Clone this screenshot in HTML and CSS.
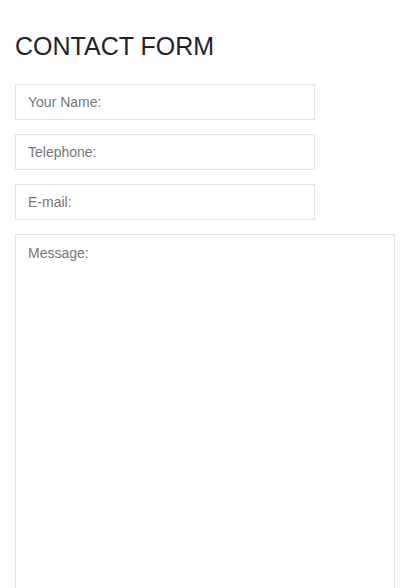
FILE: index.html
```html
<!DOCTYPE html>
<html>
    <head>
        <title>Contact Form</title>
        <meta name="viewport" content="width=device-width, initial-scale=1.0" />
        <link rel="stylesheet" href="styles.css">
    </head>
    <body>
        <h2 class="title">CONTACT FORM</h2>
        <form class="contactForm">
            <input type="text" class="field" placeholder="Your Name:" />
            <input type="tel" class="field" placeholder="Telephone:" />
            <input type="email" class="field" placeholder="E-mail:" />
            <textarea class="message" placeholder="Message:"></textarea>
        </form>
    </body>
</html>
```

FILE: styles.css
```css
body {
    margin: 0;
    padding: 0 15px;
    background: #fff;
    font-family: "Liberation Sans", Arial, sans-serif;
    color: #222;
}

.title {
    margin: 0;
    padding-top: 32px;
    font-size: 25px;
    font-weight: normal;
    line-height: 28px;
    color: #1f2328;
}

.contactForm {
    display: flex;
    flex-direction: column;
    align-items: flex-start;
    gap: 14px;
    margin-top: 24px;
}

.field,
.message {
    box-sizing: border-box;
    margin: 0;
    padding: 0 12px;
    border: 1px solid #e3e3e3;
    border-radius: 0;
    font-family: inherit;
    font-size: 14px;
    color: #333;
    outline: none;
}

.field {
    width: 300px;
    height: 36px;
}

.message {
    width: 380px;
    height: 400px;
    padding-top: 10px;
    resize: none;
}

.field::placeholder,
.message::placeholder {
    color: #777;
}
```
